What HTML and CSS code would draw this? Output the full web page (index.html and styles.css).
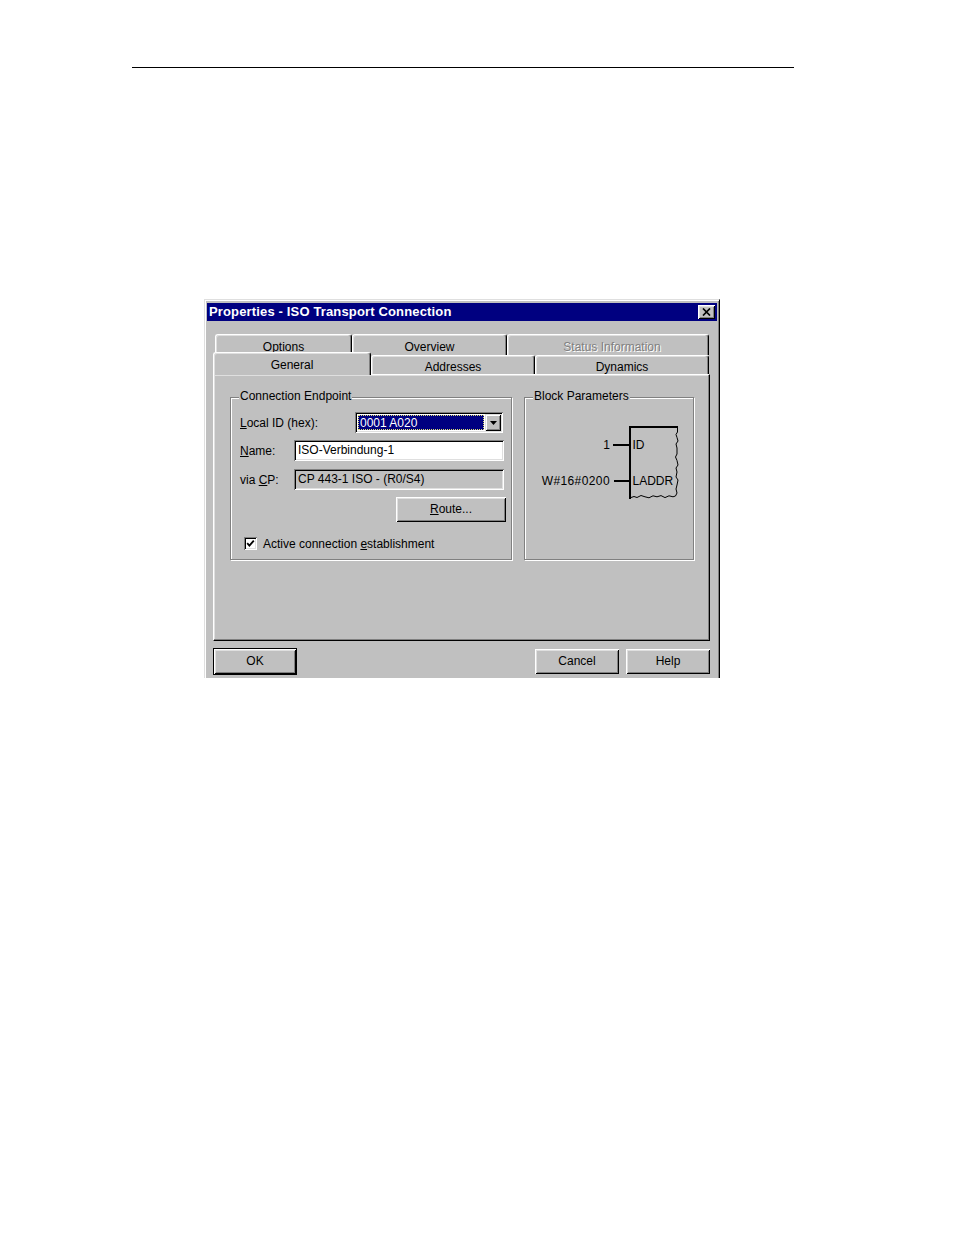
FILE: index.html
```html
<!DOCTYPE html>
<html>
<head>
<meta charset="utf-8">
<title>Properties - ISO Transport Connection</title>
<link rel="stylesheet" href="styles.css">
</head>
<body>
<div class="rule"></div>
<div class="dialog">
  <div class="titlebar">
    <span class="title">Properties - ISO Transport Connection</span>
    <span class="close"><svg width="9" height="8" viewBox="0 0 9 8"><path d="M1 0.5 L8 7.5 M8 0.5 L1 7.5" stroke="#000" stroke-width="1.7" fill="none"/></svg></span>
  </div>
  <div class="body">
    <div class="tabrow back">
      <div class="tab t-options">Options</div>
      <div class="tab t-overview">Overview</div>
      <div class="tab t-status disabled">Status Information</div>
    </div>
    <div class="tabrow front">
      <div class="tab selected t-general">General</div>
      <div class="tab t-addresses">Addresses</div>
      <div class="tab t-dynamics">Dynamics</div>
    </div>
    <div class="panel">
      <div class="group g-endpoint">
        <div class="glabel">Connection Endpoint</div>
        <div class="frow r-local">
          <span class="flabel flabel-local"><u>L</u>ocal ID (hex):</span>
          <div class="combo">
            <div class="sel">0001 A020</div>
            <div class="dd"><svg width="7" height="4" viewBox="0 0 7 4"><polygon points="0,0 7,0 3.5,4" fill="#000"/></svg></div>
          </div>
        </div>
        <div class="frow r-name">
          <span class="flabel"><u>N</u>ame:</span>
          <div class="edit">ISO-Verbindung-1</div>
        </div>
        <div class="frow r-cp">
          <span class="flabel">via <u>C</u>P:</span>
          <div class="edit edit-disabled">CP 443-1 ISO - (R0/S4)</div>
        </div>
        <div class="r-route"><div class="btn btn-route"><u>R</u>oute...</div></div>
        <div class="r-check">
          <span class="checkbox"><svg width="9" height="9" viewBox="0 0 9 9"><polyline points="1.2,4.2 3.4,6.6 7.8,1.6" fill="none" stroke="#000" stroke-width="1.8"/></svg></span>
          <span class="checklabel">Active connection <u>e</u>stablishment</span>
        </div>
      </div>
      <div class="group g-block">
        <div class="glabel">Block Parameters</div>
        <svg class="diagram" width="166" height="140" viewBox="0 0 166 140">
          <rect x="103" y="16" width="2" height="73" fill="#000"/>
          <rect x="103" y="16" width="49" height="2" fill="#000"/>
          <polyline points="151.5,17 151.5,22 150,24.5 151,27.5 152,31 150,34 151,38 151,44 149.5,47 151,50.5 152,55 150,58 151,62 150,67 152,70 151,75 150,79 151,83 149.5,86" fill="none" stroke="#000" stroke-width="1"/>
          <polyline points="105,87.5 108,86.5 111,87.5 115,85.5 119,86.8 123,87.8 127,85.8 131,86.8 135,85.6 139,87.6 143,85.8 147,86.8 149.5,86" fill="none" stroke="#000" stroke-width="1"/>
          <rect x="87" y="34" width="16" height="2" fill="#000"/>
          <rect x="88" y="70" width="15" height="2" fill="#000"/>
          <text x="84" y="39" text-anchor="end" class="dtext">1</text>
          <text x="106.5" y="39" class="dtext">ID</text>
          <text x="84" y="75" text-anchor="end" class="dtext dwide">W#16#0200</text>
          <text x="106.5" y="75" class="dtext">LADDR</text>
        </svg>
      </div>
    </div>
    <div class="buttons">
      <div class="btn btn-ok">OK</div>
      <div class="btn btn-cancel">Cancel</div>
      <div class="btn btn-help">Help</div>
    </div>
  </div>
</div>
</body>
</html>
```

FILE: styles.css
```css
body {
  margin: 0;
  background: #fff;
  font-family: "Liberation Sans", Arial, sans-serif;
  font-size: 12px;
  color: #000;
}

.rule {
  margin: 67px 0 0 132px;
  width: 662px;
  height: 1px;
  background: #000;
}

.dialog {
  box-sizing: border-box;
  margin: 231px 0 0 204px;
  width: 516px;
  height: 379px;
  background: #c0c0c0;
  border-top: 1px solid #dfdfdf;
  border-left: 1px solid #dfdfdf;
  border-right: 1px solid #000;
  box-shadow: inset 1px 1px 0 #fff, inset -1px 0 0 #808080;
  padding: 3px 2px 0 2px;
  overflow: hidden;
}

.titlebar {
  box-sizing: border-box;
  height: 18px;
  background: #000080;
  color: #fff;
  font-weight: bold;
  display: flex;
  align-items: center;
  justify-content: space-between;
  padding: 0 2px;
}

.title {
  font-size: 13px;
  letter-spacing: 0.15px;
  line-height: 18px;
  white-space: nowrap;
}

.close {
  box-sizing: border-box;
  width: 17px;
  height: 14px;
  background: #c0c0c0;
  box-shadow: inset 1px 1px 0 #fff, inset -1px -1px 0 #000, inset 2px 2px 0 #dfdfdf, inset -2px -2px 0 #808080;
  display: flex;
  align-items: center;
  justify-content: center;
}

.close svg { display: block; }

.body {
  padding-left: 6px;
}

.tabrow {
  display: flex;
  align-items: flex-start;
}

.back {
  margin-top: 13px;
  padding-left: 2px;
  height: 21px;
}

.front {
  height: 19px;
}

.tab {
  box-sizing: border-box;
  background: #c0c0c0;
  border-top: 1px solid #fff;
  border-left: 1px solid #fff;
  border-right: 1px solid #000;
  border-radius: 3px 3px 0 0;
  box-shadow: inset -1px 0 0 #808080, inset 1px 1px 0 #dfdfdf;
  text-align: center;
  line-height: 16px;
  white-space: nowrap;
}

.back .tab {
  height: 21px;
  padding-top: 4px;
}

.front .tab {
  height: 19px;
  padding-top: 3px;
}

.front .tab.selected {
  height: 23px;
  margin: -3px 0 -1px 0;
  padding-top: 4px;
  position: relative;
  z-index: 1;
}

.t-options { width: 137px; }
.t-overview { width: 155px; }
.t-status { width: 202px; padding-left: 8px; }
.t-general { width: 158px; }
.t-addresses { width: 164px; }
.t-dynamics { width: 174px; }

.disabled {
  color: #808080;
  text-shadow: 1px 1px 0 #fff;
}

.panel {
  box-sizing: border-box;
  width: 497px;
  height: 267px;
  border: 1px solid;
  border-color: #fff #000 #000 #fff;
  box-shadow: inset -1px -1px 0 #808080, inset 1px 1px 0 #dfdfdf;
  padding: 22px 0 0 16px;
  display: flex;
  align-items: flex-start;
  gap: 12px;
}

.group {
  box-sizing: border-box;
  height: 163px;
  border: 1px solid #808080;
  box-shadow: inset 1px 1px 0 #fff, 1px 1px 0 #fff;
}

.g-endpoint { width: 282px; }
.g-block { width: 170px; }

.glabel {
  display: table;
  margin: -9px 0 0 8px;
  padding: 0 1px;
  height: 14px;
  box-sizing: border-box;
  background: #c0c0c0;
  line-height: 14px;
  white-space: nowrap;
}

.frow {
  display: flex;
  align-items: center;
  height: 21px;
  padding-left: 9px;
}

.r-local { margin-top: 9px; }
.r-name { margin-top: 7px; }
.r-cp { margin-top: 8px; }

.flabel {
  width: 54px;
  flex: none;
  white-space: nowrap;
}

.flabel-local { width: 115px; }

.combo {
  box-sizing: border-box;
  width: 148px;
  height: 21px;
  padding: 2px;
  background: #fff;
  display: flex;
  box-shadow: inset 1px 1px 0 #808080, inset -1px -1px 0 #fff, inset 2px 2px 0 #000, inset -2px -2px 0 #dfdfdf;
}

.sel {
  flex: 1;
  margin: 1px;
  background: #000080;
  color: #fff;
  outline: 1px dotted #e0e070;
  outline-offset: -1px;
  padding: 1px 0 0 2px;
  line-height: 14px;
}

.dd {
  box-sizing: border-box;
  width: 16px;
  height: 17px;
  background: #c0c0c0;
  box-shadow: inset 1px 1px 0 #dfdfdf, inset -1px -1px 0 #000, inset 2px 2px 0 #fff, inset -2px -2px 0 #808080;
  display: flex;
  align-items: center;
  justify-content: center;
}

.dd svg { display: block; }

.edit {
  box-sizing: border-box;
  width: 210px;
  height: 21px;
  padding: 0 0 0 4px;
  line-height: 20px;
  background: #fff;
  white-space: nowrap;
  box-shadow: inset 1px 1px 0 #808080, inset -1px -1px 0 #fff, inset 2px 2px 0 #000, inset -2px -2px 0 #dfdfdf;
}

.edit-disabled {
  background: #c0c0c0;
}

.r-route {
  margin: 7px 0 0 165px;
}

.btn {
  box-sizing: border-box;
  width: 84px;
  height: 25px;
  background: #c0c0c0;
  box-shadow: inset 1px 1px 0 #fff, inset -1px -1px 0 #000, inset 2px 2px 0 #dfdfdf, inset -2px -2px 0 #808080;
  text-align: center;
  line-height: 25px;
}

.btn-route {
  width: 110px;
}

.r-check {
  margin-top: 15px;
  padding-left: 13px;
  display: flex;
  align-items: center;
  height: 13px;
}

.checkbox {
  box-sizing: border-box;
  width: 13px;
  height: 13px;
  background: #fff;
  box-shadow: inset 1px 1px 0 #808080, inset -1px -1px 0 #fff, inset 2px 2px 0 #000, inset -2px -2px 0 #dfdfdf;
  display: flex;
  align-items: center;
  justify-content: center;
  flex: none;
}

.checkbox svg { display: block; }

.checklabel {
  margin-left: 6px;
  line-height: 14px;
  white-space: nowrap;
}

.diagram {
  display: block;
  margin: 7px 0 0 1px;
}

.dtext {
  font-family: "Liberation Sans", Arial, sans-serif;
  font-size: 12px;
  fill: #000;
}

.dwide {
  letter-spacing: 0.4px;
}

.buttons {
  display: flex;
  align-items: flex-start;
  width: 497px;
  margin-top: 7px;
}

.btn-ok {
  height: 27px;
  border: 1px solid #000;
  line-height: 25px;
}

.btn-cancel {
  margin-left: auto;
  margin-top: 1px;
}

.btn-help {
  margin-left: 7px;
  margin-top: 1px;
}
```
